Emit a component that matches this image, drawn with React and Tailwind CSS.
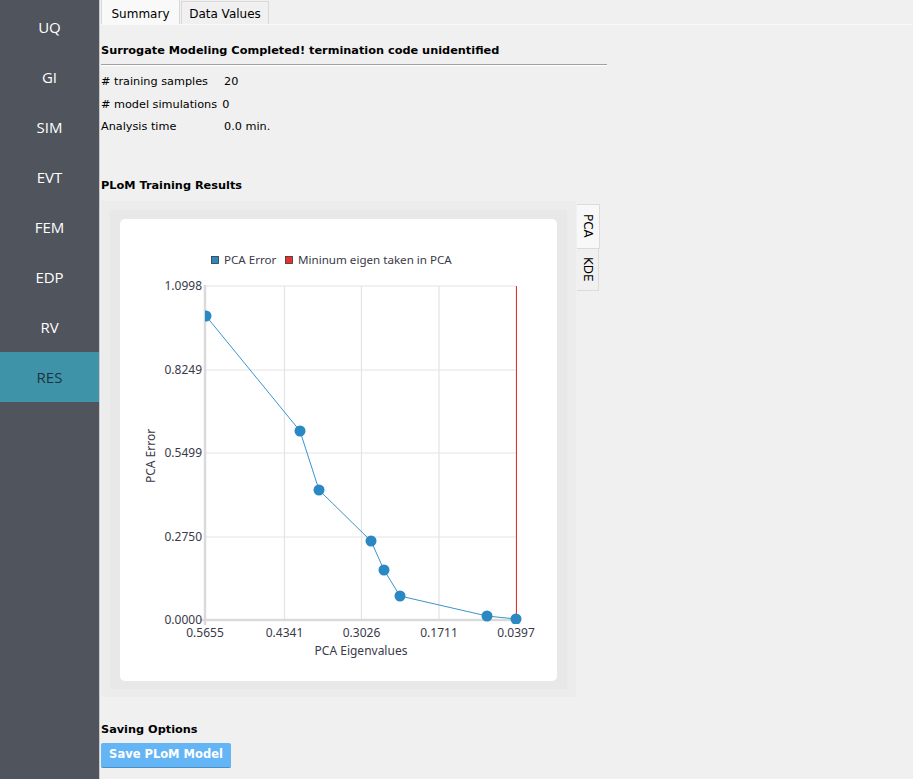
import React from "react";

const navItems = ["UQ", "GI", "SIM", "EVT", "FEM", "EDP", "RV", "RES"];

function Chart() {
  const xTicks = [
    { x: 85, l: "0.5655" },
    { x: 164.5, l: "0.4341" },
    { x: 241.5, l: "0.3026" },
    { x: 319, l: "0.1711" },
    { x: 396, l: "0.0397" },
  ];
  const yTicks = [
    { y: 67, l: "1.0998" },
    { y: 151, l: "0.8249" },
    { y: 234, l: "0.5499" },
    { y: 318, l: "0.2750" },
    { y: 401, l: "0.0000" },
  ];
  const pts = [
    [86, 97],
    [180, 212],
    [199, 271],
    [251, 322],
    [264, 351],
    [280, 377],
    [367, 397],
    [396, 400],
  ];
  const font = '"Noto Sans", "Open Sans", sans-serif';
  return (
    <svg width="438" height="462" viewBox="0 0 438 462" className="block">
      <defs>
        <clipPath id="plot">
          <rect x="85" y="60" width="320" height="345" />
        </clipPath>
      </defs>
      {xTicks.map((t, i) => (
        <line key={"gx" + i} x1={t.x} y1={67} x2={t.x} y2={401} stroke="#e3e3e3" strokeWidth="1.2" />
      ))}
      {yTicks.map((t, i) => (
        <line key={"gy" + i} x1={85} y1={t.y} x2={396} y2={t.y} stroke="#e3e3e3" strokeWidth="1.2" />
      ))}
      <line x1={85} y1={66} x2={85} y2={406} stroke="#dadada" strokeWidth="2.5" />
      <line x1={80} y1={401} x2={397} y2={401} stroke="#dadada" strokeWidth="2.5" />
      <line x1={396.5} y1={67} x2={396.5} y2={401} stroke="#e5322d" strokeWidth="1" />
      <g clipPath="url(#plot)">
        <polyline
          points={pts.map((p) => p.join(",")).join(" ")}
          fill="none"
          stroke="#3a94cb"
          strokeWidth="1"
        />
        {pts.map((p, i) => (
          <circle key={i} cx={p[0]} cy={p[1]} r="5.5" fill="#2a88c2" />
        ))}
      </g>
      {yTicks.map((t, i) => (
        <text key={"ly" + i} x={82} y={t.y + 4} textAnchor="end" fontFamily={font} fontSize="12" fill="#3a3a4a">
          {t.l}
        </text>
      ))}
      {xTicks.map((t, i) => (
        <text key={"lx" + i} x={t.x} y={418} textAnchor="middle" fontFamily={font} fontSize="12" fill="#3a3a4a">
          {t.l}
        </text>
      ))}
      <text x={241} y={436} textAnchor="middle" fontFamily={font} fontSize="12" fill="#3a3a4a">
        PCA Eigenvalues
      </text>
      <text
        x={0}
        y={0}
        transform="translate(35 237) rotate(-90)"
        textAnchor="middle"
        fontFamily={font}
        fontSize="12"
        fill="#3a3a4a"
      >
        PCA Error
      </text>
      <rect x={91.5} y={37.5} width={7} height={7} fill="#2a88c2" stroke="#333" strokeWidth="0.8" />
      <text x={104} y={45} fontFamily={font} fontSize="11.6" fill="#3a3a4a">
        PCA Error
      </text>
      <rect x={165.5} y={37.5} width={7} height={7} fill="#e5322d" stroke="#333" strokeWidth="0.8" />
      <text x={178} y={45} fontFamily={font} fontSize="11.6" fill="#3a3a4a">
        Mininum eigen taken in PCA
      </text>
    </svg>
  );
}

export default function App() {
  const ui = { fontFamily: '"DejaVu Sans", Verdana, sans-serif' };
  return (
    <div className="flex h-[779px] w-[913px] overflow-hidden bg-[#f0f0f0] text-black" style={ui}>
      <div className="w-[100px] shrink-0 bg-[#50545c] pt-[2px] border-r border-r-[#c9c9c9]">
        {navItems.map((n) => (
          <div
            key={n}
            className={
              "flex h-[50px] items-center justify-center text-[15px] " +
              (n === "RES" ? "bg-[#3f93a8] text-[#1d3440]" : "text-white")
            }
            style={{ fontFamily: '"Open Sans", "Noto Sans", sans-serif' }}
          >
            {n}
          </div>
        ))}
      </div>

      <div className="flex-1 pl-[1px]">
        <div className="flex h-[25px] items-end border-b border-b-[#f9f9f9] text-[12px]">
          <div className="flex h-[25px] w-[79px] items-center justify-center border border-b-0 border-[#d9d9d9] bg-[#f9f9f9] pt-[3px]">
            Summary
          </div>
          <div className="ml-[1px] flex h-[23px] w-[88px] items-center justify-center border border-b-0 border-[#d9d9d9] bg-[#f0f0f0] pt-[2px]">
            Data Values
          </div>
        </div>

        <div className="w-[506px]">
          <div className="pt-[18px] text-[11.3px] font-bold leading-[16px]">
            Surrogate Modeling Completed! termination code unidentified
          </div>
          <div className="mt-[5px] border-t border-b border-t-[#a0a0a0] border-b-white" />
          <div className="mt-[5px] text-[11.25px] leading-[22.5px]">
            <div className="flex">
              <span className="w-[123px]"># training samples</span>
              <span>20</span>
            </div>
            <div className="flex">
              <span># model simulations</span>
              <span className="ml-[5px]">0</span>
            </div>
            <div className="flex">
              <span className="w-[123px]">Analysis time</span>
              <span>0.0 min.</span>
            </div>
          </div>
          <div className="mt-[39px] text-[11.3px] font-bold leading-[16px]">PLoM Training Results</div>
        </div>

        <div className="mt-[7px] flex">
          <div className="w-[475px] bg-[#ececec] p-[9px] pb-[8px]">
            <div className="bg-[#e8e8e8] px-[10px] pt-[9px] pb-[8px]">
              <div className="overflow-hidden rounded-[5px] bg-white">
                <Chart />
              </div>
            </div>
          </div>
          <div className="ml-[1px] pt-[3px] text-[12px]">
            <div
              className="flex h-[45px] w-[23px] items-center justify-center border border-l-0 border-[#dcdcdc] bg-[#f8f8f8]"
              style={{ writingMode: "vertical-rl" }}
            >
              PCA
            </div>
            <div
              className="flex h-[42px] w-[22px] items-center justify-center border border-l-0 border-t-0 border-[#dcdcdc] bg-[#f0f0f0]"
              style={{ writingMode: "vertical-rl" }}
            >
              KDE
            </div>
          </div>
        </div>

        <div className="mt-[25px] text-[11.3px] font-bold leading-[16px]">Saving Options</div>
        <button className="mt-[5px] flex h-[25px] w-[130px] items-center justify-center rounded-[2px] border-b border-b-[#4a90c8] bg-[#64b5f6] text-[11.5px] font-bold text-white">
          Save PLoM Model
        </button>
      </div>
    </div>
  );
}
